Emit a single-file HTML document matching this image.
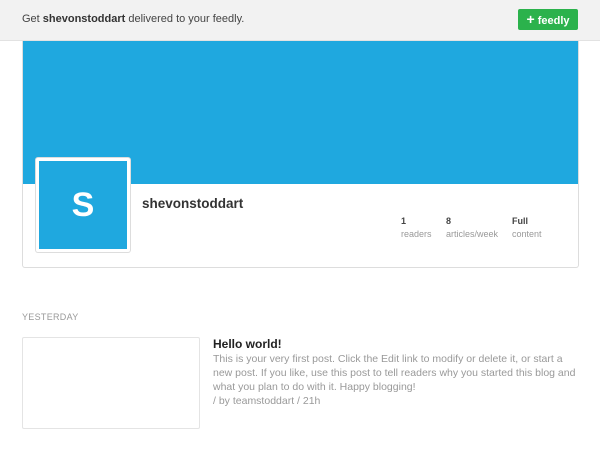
<!DOCTYPE html>
<html><head><style>
body{margin:0;width:600px;height:450px;background:#fff;font-family:"Liberation Sans",Arial,sans-serif;position:relative;overflow:hidden}
.bar{position:absolute;left:0;top:0;width:600px;height:40px;background:#f2f2f2;border-bottom:1px solid #e2e2e2}
.bar .t{position:absolute;left:22px;top:13px;font-size:11px;color:#444}
.btn{position:absolute;left:518px;top:9px;width:60px;height:21px;background:#2bb24c;border-radius:2px;color:#fff;font-size:11px;font-weight:bold;line-height:21px;text-align:center}
.btn span{font-size:14px}
.card{position:absolute;left:22px;top:41px;width:555px;height:226px;border:1px solid #ddd;border-top:none;border-radius:0 0 3px 3px}
.blue{position:absolute;left:0;top:0;width:555px;height:143px;background:#1fa8df}
.av{position:absolute;left:13px;top:117px;width:88px;height:88px;background:#1fa8df;border:3px solid #fff;box-shadow:0 0 0 1px #ddd;border-radius:2px;color:#fff;font-size:34px;font-weight:bold;text-align:center;line-height:88px}
.name{position:absolute;left:119px;top:155px;font-size:13.5px;font-weight:bold;color:#333}
.st{position:absolute;top:174px;font-size:9px;color:#999;line-height:12.5px}
.st b{color:#444;display:block}
.y{position:absolute;left:22px;top:312px;font-size:9px;color:#999;letter-spacing:.3px}
.th{position:absolute;left:22px;top:337px;width:176px;height:90px;border:1px solid #e4e4e4;border-radius:2px}
.h{position:absolute;left:213px;top:337px;font-size:12px;font-weight:bold;color:#222}
.p{position:absolute;left:213px;top:352px;width:370px;font-size:10.5px;line-height:14px;color:#999}
</style></head><body>
<div class="bar"><div class="t">Get <b style="color:#333">shevonstoddart</b> delivered to your feedly.</div><div class="btn"><span>+</span> feedly</div></div>
<div class="card"><div class="blue"></div><div class="av">S</div>
<div class="name">shevonstoddart</div>
<div class="st" style="left:378px"><b>1</b>readers</div>
<div class="st" style="left:423px"><b>8</b>articles/week</div>
<div class="st" style="left:489px"><b>Full</b>content</div>
</div>
<div class="y">YESTERDAY</div>
<div class="th"></div>
<div class="h">Hello world!</div>
<div class="p">This is your very first post. Click the Edit link to modify or delete it, or start a new post. If you like, use this post to tell readers why you started this blog and what you plan to do with it. Happy blogging!<br>/ by teamstoddart / 21h</div>
</body></html>
